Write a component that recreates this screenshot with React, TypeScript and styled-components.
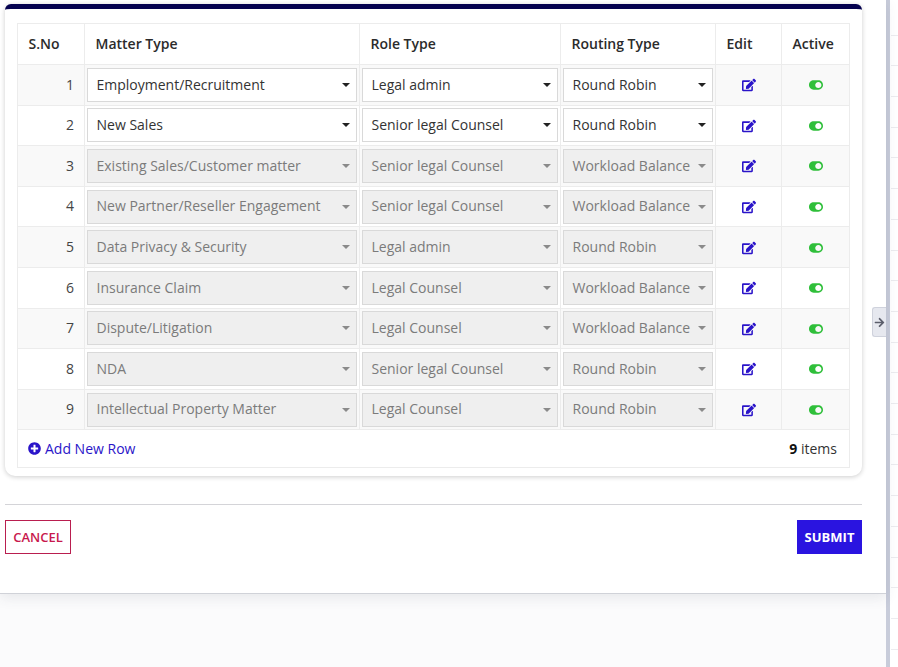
import styled, { createGlobalStyle } from "styled-components";
import { FaEdit, FaToggleOn, FaPlusCircle, FaArrowRight } from "react-icons/fa";

const GlobalStyle = createGlobalStyle`
  html, body {
    margin: 0;
    padding: 0;
    background: #ffffff;
    font-family: "Open Sans", "Liberation Sans", sans-serif;
    overflow: hidden;
  }
`;

const Page = styled.div`
  display: flex;
  width: 898px;
  height: 667px;
  overflow: hidden;
`;

const MainColumn = styled.div`
  position: relative;
  width: 886px;
  flex: none;
  display: flex;
  flex-direction: column;
  background: #fbfbfc;
`;

const Sheet = styled.main`
  height: 594px;
  box-sizing: border-box;
  background: #ffffff;
  padding: 4px 24px 0 5px;
  border-bottom: 1px solid #d0d2d8;
  box-shadow: 0 4px 12px rgba(60, 64, 90, 0.1);
`;

const Divider = styled.div`
  width: 4px;
  flex: none;
  background: #c8ccda;
`;

const SideStrip = styled.div`
  flex: 1;
  margin-left: 1px;
  background: repeating-linear-gradient(
    to bottom,
    #ffffff 0,
    #ffffff 29.7px,
    #ececef 29.7px,
    #ececef 30.7px
  );
  background-position: 0 5px;
`;

const Card = styled.section`
  height: 472px;
  box-sizing: border-box;
  background: #ffffff;
  border-top: 5px solid #05024f;
  border-radius: 6px 6px 10px 10px;
  box-shadow: 0 1px 5px rgba(0, 0, 0, 0.2);
  padding: 14px 12px 0;
`;

const Table = styled.table`
  width: 832px;
  table-layout: fixed;
  border-collapse: collapse;
  border: 1px solid #ececec;
  font-size: 14px;
  color: #333333;
`;

const HeadCell = styled.th<{ $w: number }>`
  width: ${(p) => p.$w}px;
  height: 41px;
  box-sizing: border-box;
  padding: 0 10px 2px 10.5px;
  text-align: left;
  font-weight: 600;
  font-size: 14px;
  color: #2b2b2b;
  border: 1px solid #ececec;
`;

const Row = styled.tr`
  height: 40.6px;
  &:nth-child(odd) {
    background: #f9f9f9;
  }
`;

const NumCell = styled.td`
  box-sizing: border-box;
  padding: 0 10px 1.4px;
  text-align: right;
  border: 1px solid #ececec;
  color: #444444;
`;

const SelectCell = styled.td`
  box-sizing: border-box;
  padding: 0 2px;
  border: 1px solid #ececec;
`;

const IconCell = styled.td<{ $color: string; $size: number }>`
  box-sizing: border-box;
  padding: 3px 0 0;
  text-align: center;
  border: 1px solid #ececec;
  color: ${(p) => p.$color};
  font-size: ${(p) => p.$size}px;
  line-height: 1;
`;

const FakeSelect = styled.div<{ $disabled: boolean }>`
  height: 34px;
  box-sizing: border-box;
  display: flex;
  align-items: center;
  justify-content: space-between;
  padding: 0 6px 1.4px 8.5px;
  background: ${(p) => (p.$disabled ? "#efefef" : "#ffffff")};
  border: 1px solid #d9d9d9;
  color: ${(p) => (p.$disabled ? "#7b7b7b" : "#333333")};
  white-space: nowrap;
`;

const Caret = styled.span<{ $disabled: boolean }>`
  flex: none;
  width: 0;
  height: 0;
  margin: 1.4px 0 0 6px;
  border-left: 4px solid transparent;
  border-right: 4px solid transparent;
  border-top: 4.5px solid ${(p) => (p.$disabled ? "#8a8a8a" : "#222222")};
`;

const FootCell = styled.td`
  height: 37px;
  padding: 0 12px 0 10px;
  border: 1px solid #ececec;
`;

const FootRow = styled.div`
  display: flex;
  align-items: center;
  justify-content: space-between;
`;

const AddLink = styled.a`
  display: flex;
  align-items: center;
  gap: 4px;
  color: #2a14c9;
  font-size: 14px;
`;

const Count = styled.span`
  color: #333333;
  b {
    color: #111111;
    font-weight: 700;
  }
`;

const Rule = styled.hr`
  margin: 28px 0 15px;
  border: none;
  border-top: 1px solid #d4d4d8;
`;

const Actions = styled.div`
  display: flex;
  justify-content: space-between;
`;

const CancelButton = styled.button`
  width: 66px;
  height: 34px;
  padding: 0;
  background: #ffffff;
  border: 1px solid #b91e4f;
  color: #c8194d;
  font: 600 13px "Open Sans", sans-serif;
`;

const SubmitButton = styled.button`
  width: 65px;
  height: 34px;
  padding: 0;
  background: #2a14e0;
  border: none;
  color: #ffffff;
  font: 700 13px "Open Sans", sans-serif;
`;

const PanelHandle = styled.div`
  position: absolute;
  top: 307px;
  right: 0;
  width: 14px;
  height: 30px;
  box-sizing: border-box;
  display: flex;
  align-items: center;
  justify-content: center;
  background: #e6e8ef;
  border: 1px solid #cfd2dc;
  border-right: none;
  border-radius: 3px 0 0 3px;
  color: #5b5e6b;
  font-size: 11px;
`;

const rows = [
  ["Employment/Recruitment", "Legal admin", "Round Robin"],
  ["New Sales", "Senior legal Counsel", "Round Robin"],
  ["Existing Sales/Customer matter", "Senior legal Counsel", "Workload Balance"],
  ["New Partner/Reseller Engagement", "Senior legal Counsel", "Workload Balance"],
  ["Data Privacy & Security", "Legal admin", "Round Robin"],
  ["Insurance Claim", "Legal Counsel", "Workload Balance"],
  ["Dispute/Litigation", "Legal Counsel", "Workload Balance"],
  ["NDA", "Senior legal Counsel", "Round Robin"],
  ["Intellectual Property Matter", "Legal Counsel", "Round Robin"],
];

function Select({ value, disabled }: { value: string; disabled: boolean }) {
  return (
    <FakeSelect $disabled={disabled}>
      {value}
      <Caret $disabled={disabled} />
    </FakeSelect>
  );
}

export default function App() {
  return (
    <Page>
      <GlobalStyle />
      <MainColumn>
        <Sheet>
          <Card>
            <Table>
              <thead>
                <tr>
                  <HeadCell $w={67}>S.No</HeadCell>
                  <HeadCell $w={275}>Matter Type</HeadCell>
                  <HeadCell $w={201}>Role Type</HeadCell>
                  <HeadCell $w={155}>Routing Type</HeadCell>
                  <HeadCell $w={66}>Edit</HeadCell>
                  <HeadCell $w={68}>Active</HeadCell>
                </tr>
              </thead>
              <tbody>
                {rows.map((r, i) => (
                  <Row key={r[0]}>
                    <NumCell>{i + 1}</NumCell>
                    {r.map((v) => (
                      <SelectCell key={v}>
                        <Select value={v} disabled={i > 1} />
                      </SelectCell>
                    ))}
                    <IconCell $color="#2a14c9" $size={14}>
                      <FaEdit />
                    </IconCell>
                    <IconCell $color="#2fbf3a" $size={14}>
                      <FaToggleOn />
                    </IconCell>
                  </Row>
                ))}
              </tbody>
              <tfoot>
                <tr>
                  <FootCell colSpan={6}>
                    <FootRow>
                      <AddLink>
                        <FaPlusCircle size={13} />
                        Add New Row
                      </AddLink>
                      <Count>
                        <b>9</b> items
                      </Count>
                    </FootRow>
                  </FootCell>
                </tr>
              </tfoot>
            </Table>
          </Card>
          <Rule />
          <Actions>
            <CancelButton>CANCEL</CancelButton>
            <SubmitButton>SUBMIT</SubmitButton>
          </Actions>
        </Sheet>
        <PanelHandle>
          <FaArrowRight />
        </PanelHandle>
      </MainColumn>
      <Divider />
      <SideStrip />
    </Page>
  );
}
